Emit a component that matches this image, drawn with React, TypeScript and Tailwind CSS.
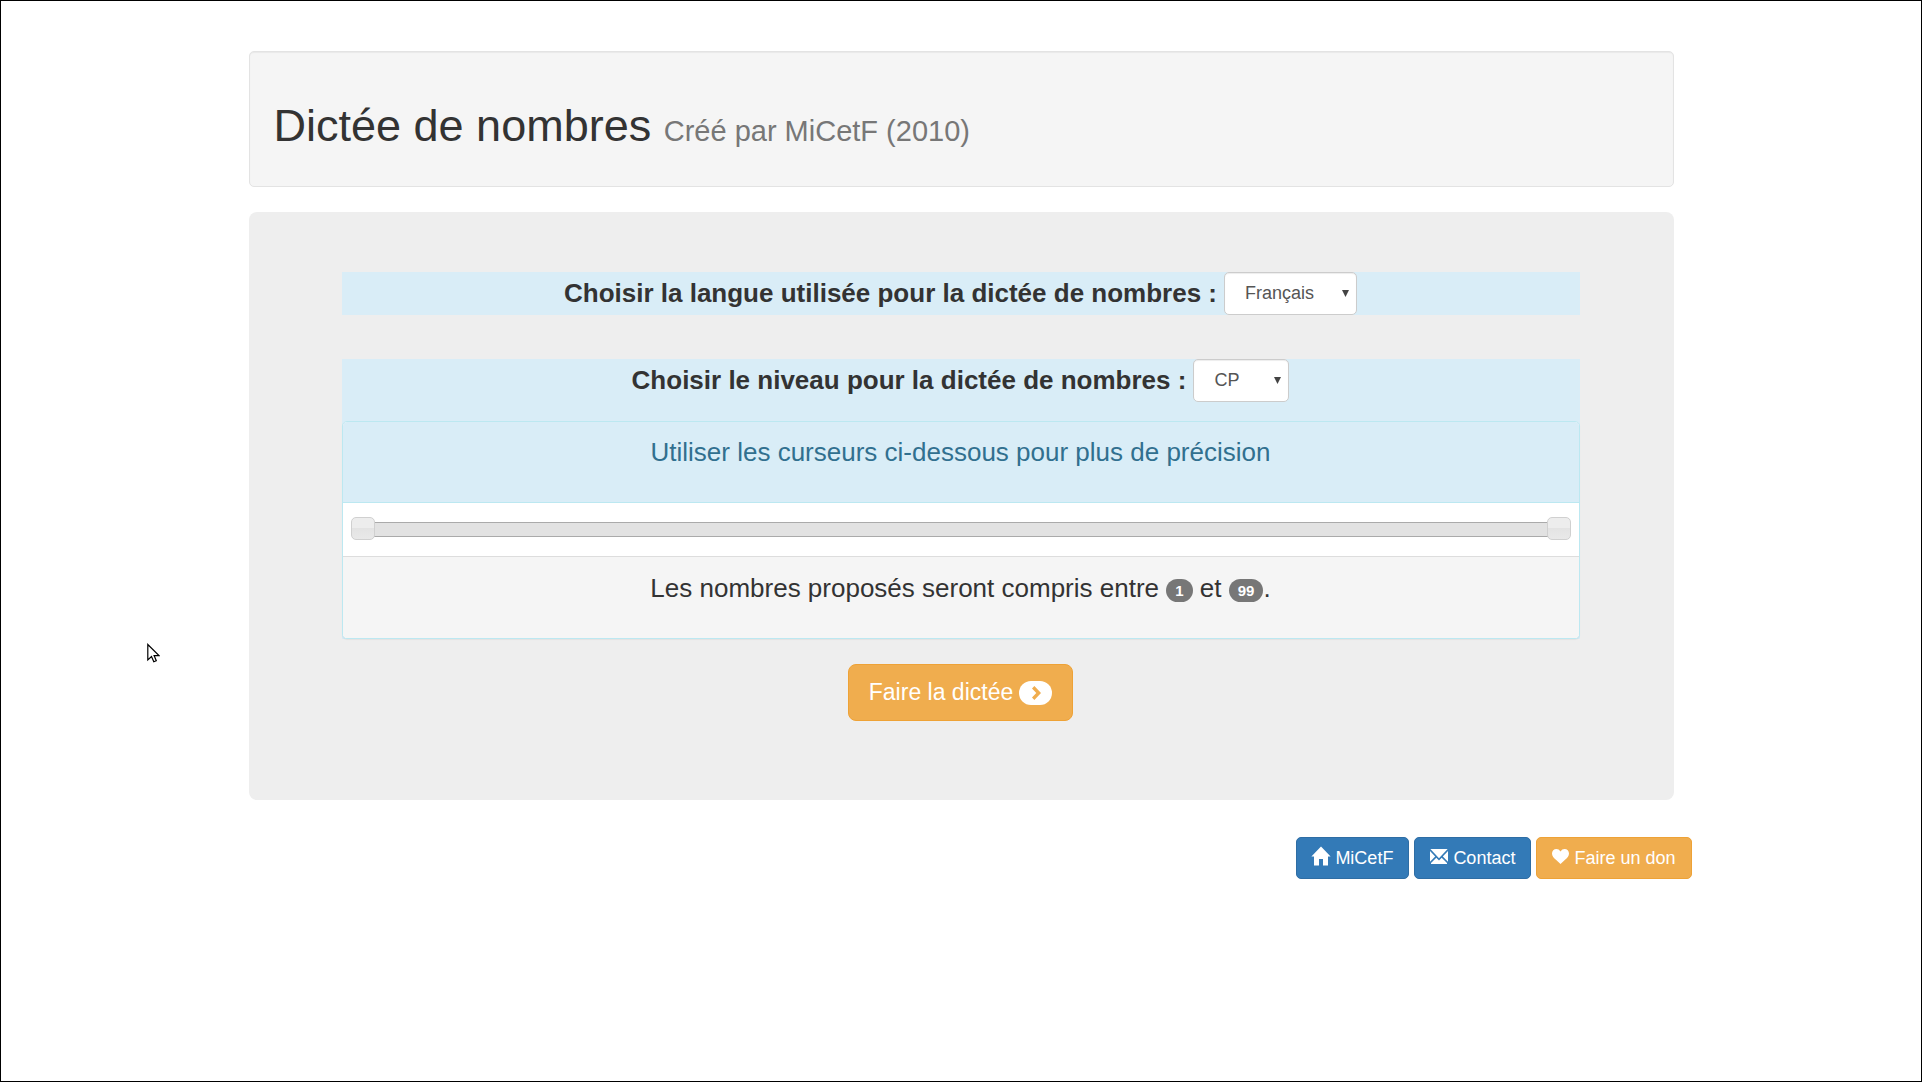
import { useState, type ReactNode } from "react";

function SelectBox({
  id,
  options,
  widthClass,
}: {
  id: string;
  options: string[];
  widthClass: string;
}) {
  return (
    <span className={`relative inline-block ${widthClass}`}>
      <select
        id={id}
        className="block h-[43px] w-full appearance-none rounded-[5px] border border-[#ccc] bg-white pr-6 pl-5 text-[18px] text-[#555] shadow-[inset_0_1px_1px_rgba(0,0,0,0.075)]"
      >
        {options.map((o) => (
          <option key={o}>{o}</option>
        ))}
      </select>
      <svg
        className="pointer-events-none absolute top-[18px] right-2 h-[7px] w-[7px]"
        viewBox="0 0 7 7"
        fill="#444"
        aria-hidden="true"
      >
        <path d="M0 0h7L3.5 7z" />
      </svg>
    </span>
  );
}

function HomeIcon() {
  return (
    <svg className="-mx-px -mt-1 h-5 w-5" viewBox="0 0 20 20" fill="currentColor" aria-hidden="true">
      <path d="M10 0.5 19.600 10.600H17V19.500H12V13H8V19.500H3V10.600H0.400z" />
    </svg>
  );
}

function EnvelopeIcon() {
  return (
    <svg className="-mt-1 h-[15px] w-[18px]" viewBox="0 0 18 15" fill="currentColor" aria-hidden="true">
      <path d="M0.4 0h17.2L9 9.2z" />
      <path d="M0 2 5.200 7.400 0 12.800z" />
      <path d="M18 2 12.800 7.400 18 12.800z" />
      <path d="M6.300 8.700 9 11.600 11.700 8.700 17 14V15H1V14z" />
    </svg>
  );
}

function HeartIcon() {
  return (
    <svg className="-mt-1 h-[15px] w-[17px]" viewBox="0 0 17 15" fill="currentColor" aria-hidden="true">
      <path d="M8.5 2.6C9.6.8 10.9 0 12.6 0 15.100 0 17 2 17 4.600 17 7.200 15.300 8.900 12.800 11L8.500 15 4.200 11C1.700 8.900 0 7.200 0 4.600 0 2 1.900 0 4.400 0 6.100 0 7.400.8 8.500 2.600z" />
    </svg>
  );
}

function ChevronIcon() {
  return (
    <svg className="h-[14px] w-[9px]" viewBox="0 0 9 14" fill="#f0ad4e" aria-hidden="true">
      <path d="M2.400 0 9 7 2.400 14 0 11.600 4.300 7 0 2.400z" />
    </svg>
  );
}

function Badge({ children }: { children: ReactNode }) {
  return (
    <span className="inline-block rounded-full bg-[#777] px-[9px] py-1 align-middle text-[15px] leading-[15px] font-bold text-white">
      {children}
    </span>
  );
}

function LinkButton({
  icon,
  label,
  tone,
}: {
  icon: ReactNode;
  label: string;
  tone: "blue" | "orange";
}) {
  const colors =
    tone === "blue" ? "bg-[#337ab7] border-[#2e6da4]" : "bg-[#f0ad4e] border-[#eea236]";
  return (
    <a
      href="#"
      className={`flex h-[42px] items-center gap-[5px] rounded-[5px] border px-[15px] text-[18px] text-white ${colors}`}
    >
      {icon}
      {label}
    </a>
  );
}

const rangeClass =
  "pointer-events-none absolute inset-0 h-full w-full appearance-none bg-transparent [&::-webkit-slider-thumb]:pointer-events-auto [&::-webkit-slider-thumb]:h-[23px] [&::-webkit-slider-thumb]:w-6 [&::-webkit-slider-thumb]:appearance-none [&::-webkit-slider-thumb]:rounded-[5px] [&::-webkit-slider-thumb]:border [&::-webkit-slider-thumb]:border-solid [&::-webkit-slider-thumb]:border-[#d0d0d0] [&::-webkit-slider-thumb]:bg-[linear-gradient(#ededed_50%,#e3e3e3_50%,#e9e9e9)]";

export default function App() {
  const [low, setLow] = useState(1);
  const [high, setHigh] = useState(99);
  return (
    <div className="relative min-h-screen border border-black bg-white pt-[50px] font-['Liberation_Sans',Arial,sans-serif] text-[#333]">
      <div className="mx-auto w-full max-w-[1425px]">
        <header className="rounded-[5px] border border-[#e3e3e3] bg-[#f5f5f5] px-6 pt-[49px] pb-[35px] shadow-[inset_0_1px_1px_rgba(0,0,0,0.05)]">
          <h1 className="text-[45px] leading-[50px]">
            Dictée de nombres{" "}
            <small className="text-[29px] leading-none text-[#777]">Créé par MiCetF (2010)</small>
          </h1>
        </header>

        <main className="mt-[25px] rounded-[8px] bg-[#eee] pt-[60px] pr-[94px] pb-[79px] pl-[93px]">
          <div className="flex items-center justify-center gap-[7px] bg-[#d9edf7]">
            <label htmlFor="langue" className="text-[26px] leading-[29px] font-bold">
              Choisir la langue utilisée pour la dictée de nombres :
            </label>
            <SelectBox id="langue" options={["Français"]} widthClass="w-[133px]" />
          </div>

          <div className="mt-11 bg-[#d9edf7]">
            <div className="flex items-center justify-center gap-[7px] pb-[19px]">
              <label htmlFor="niveau" className="text-[26px] leading-[29px] font-bold">
                Choisir le niveau pour la dictée de nombres :
              </label>
              <SelectBox id="niveau" options={["CP"]} widthClass="w-24" />
            </div>

            <section className="overflow-hidden rounded-[5px] border border-[#bce8f1] bg-white text-center text-[26px] leading-9 shadow-[0_1px_1px_rgba(0,0,0,0.05)]">
              <p className="border-b border-[#bce8f1] bg-[#d9edf7] pt-3 pb-8 text-[#31708f]">
                Utiliser les curseurs ci-dessous pour plus de précision
              </p>
              <div className="px-2 pt-[14px] pb-4">
                <div className="relative flex h-[23px] items-end px-3 pb-[3px]">
                  <div className="h-[15px] w-full border-y border-[#aaa] bg-[#e2e2e2]" />
                  <input
                    type="range"
                    aria-label="Nombre minimum"
                    min={1}
                    max={99}
                    value={low}
                    onChange={(e) => setLow(Math.min(Number(e.target.value), high))}
                    className={rangeClass}
                  />
                  <input
                    type="range"
                    aria-label="Nombre maximum"
                    min={1}
                    max={99}
                    value={high}
                    onChange={(e) => setHigh(Math.max(Number(e.target.value), low))}
                    className={rangeClass}
                  />
                </div>
              </div>
              <p className="border-t border-[#ddd] bg-[#f5f5f5] pt-[13px] pb-8">
                Les nombres proposés seront compris entre <Badge>{low}</Badge> et <Badge>{high}</Badge>.
              </p>
            </section>
          </div>

          <div className="mt-[25px] flex justify-center">
            <button
              type="button"
              className="flex h-[57px] items-center gap-[6px] rounded-[8px] border border-[#eea236] bg-[#f0ad4e] px-5 text-[23px] text-white"
            >
              Faire la dictée
              <span className="flex h-6 w-[33px] items-center justify-center rounded-full bg-white pl-0.5">
                <ChevronIcon />
              </span>
            </button>
          </div>
        </main>

        <footer className="-mr-[18px] mt-[37px] flex justify-end gap-[5px]">
          <LinkButton icon={<HomeIcon />} label="MiCetF" tone="blue" />
          <LinkButton icon={<EnvelopeIcon />} label="Contact" tone="blue" />
          <LinkButton icon={<HeartIcon />} label="Faire un don" tone="orange" />
        </footer>
      </div>

      <svg
        className="pointer-events-none absolute top-[642px] left-[146px] h-5 w-[13px]"
        viewBox="0 0 13 20"
        fill="#fff"
        stroke="#000"
        strokeWidth="1.200"
        aria-hidden="true"
      >
        <path d="M.8 1.500V17L4.500 13.600 6.800 18.800 9.300 17.700 7.100 12.600H12z" />
      </svg>
    </div>
  );
}
